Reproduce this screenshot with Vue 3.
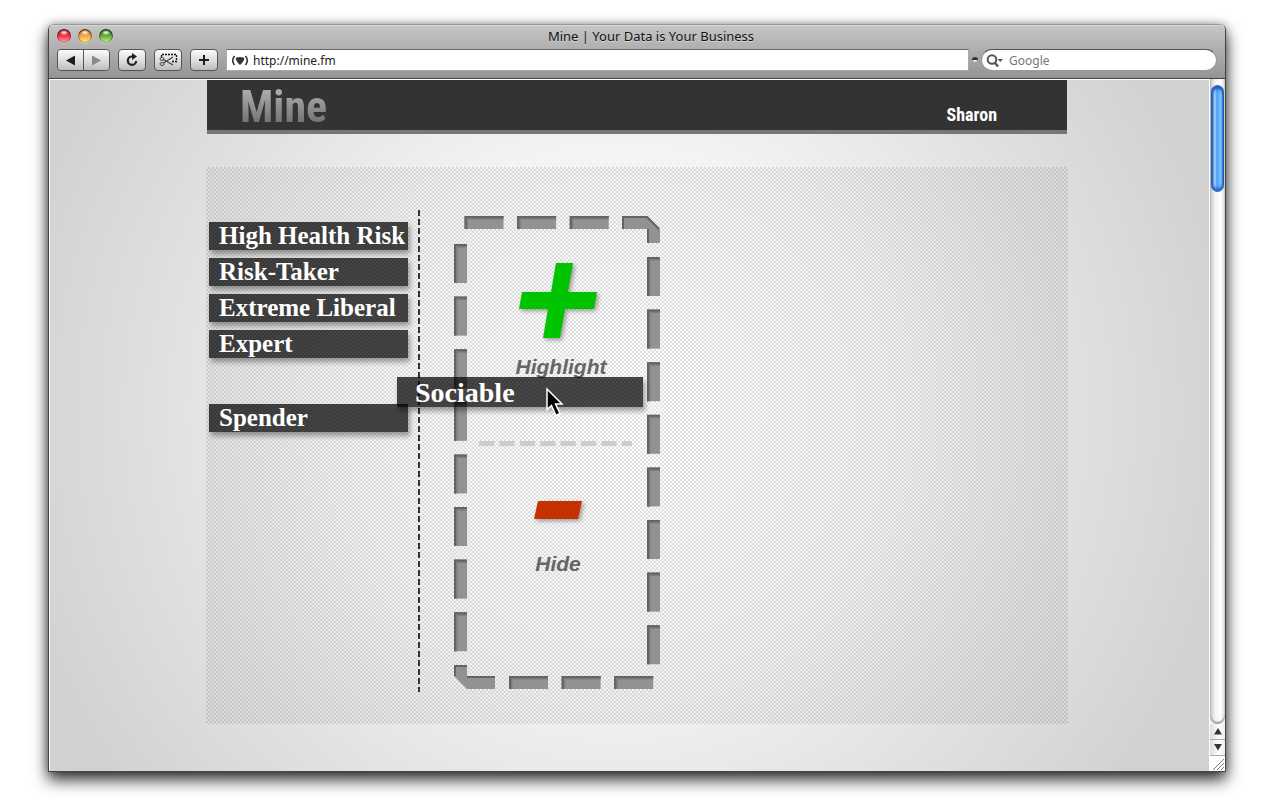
<template>
  <div class="desktop">
    <main class="window">
      <header class="chrome">
        <div class="titlebar">
          <div class="lights">
            <button class="light red" type="button" aria-label="Close"></button>
            <button class="light amber" type="button" aria-label="Minimize"></button>
            <button class="light green" type="button" aria-label="Zoom"></button>
          </div>
          <h1 class="title">Mine | Your Data is Your Business</h1>
        </div>
        <div class="toolbar">
          <div class="pair">
            <button class="tool" type="button" aria-label="Back">
              <svg width="25" height="20" viewBox="0 0 25 20"><path d="M17 5.500v10L8 10.500z" fill="#1c1c1c" /></svg>
            </button>
            <button class="tool" type="button" aria-label="Forward">
              <svg width="25" height="20" viewBox="0 0 25 20"><path d="M8 5.500v10l9-5z" fill="#8a8a8a" /></svg>
            </button>
          </div>
          <button class="tool single" type="button" aria-label="Reload">
            <svg width="26" height="20" viewBox="0 0 26 20">
              <path d="M14 6.500h-1.500a4.200 4.200 0 1 0 4.700 4.500" fill="none" stroke="#222" stroke-width="2.200" />
              <path d="M13 3l5 3.500-5 3.500z" fill="#222" />
            </svg>
          </button>
          <button class="tool single" type="button" aria-label="Clip">
            <svg width="26" height="20" viewBox="0 0 26 20" fill="none">
              <path d="M6.500 7V4.500h15v7h-5" stroke="#111" stroke-width="1.300" stroke-dasharray="2 1" />
              <g stroke="#444" stroke-width="1">
                <ellipse cx="7" cy="14" rx="2" ry="1.500" />
                <ellipse cx="7" cy="9" rx="2" ry="1.500" />
                <path d="M8.500 13L18 7M8.500 9.500L18 15" stroke-width="1.300" />
              </g>
            </svg>
          </button>
          <button class="tool single" type="button" aria-label="Add bookmark">
            <svg width="26" height="20" viewBox="0 0 26 20"><path d="M12 5h2v4h4v2h-4v4h-2v-4H8V9h4z" fill="#1c1c1c" /></svg>
          </button>
          <label class="address">
            <svg width="18" height="14" viewBox="0 0 18 14">
              <path d="M3.500 2Q0 6.500 3.500 11M14.500 2Q18 6.500 14.500 11" fill="none" stroke="#333" stroke-width="1.600" />
              <path d="M4.500 5L6 3l1.500.5L9 2.800l1.500.7L12 3l1.500 2-1 1.800L11 9l-2 2-2-2-1.500-2.200z" fill="#333" />
            </svg>
            <input v-model="address" type="text" aria-label="Address" />
          </label>
          <svg class="knob" width="6" height="6" viewBox="0 0 6 6">
            <path d="M0 3a3 3 0 0 1 6 0z" fill="#333" /><path d="M1 3h4a2 2 0 0 1-4 0z" fill="#eee" />
          </svg>
          <label class="search">
            <svg width="20" height="16" viewBox="0 0 20 16">
              <circle cx="7" cy="6.500" r="4.300" fill="none" stroke="#555" stroke-width="2" />
              <path d="M10 10l3 3.500" stroke="#555" stroke-width="2.400" />
              <path d="M12.500 6h5.500l-2.700 3z" fill="#555" />
            </svg>
            <input type="text" placeholder="Google" aria-label="Search" />
          </label>
        </div>
      </header>

      <div class="view">
        <div class="page">
          <header class="banner">
            <div class="logo">Mine</div>
            <a class="user" href="#">Sharon</a>
          </header>

          <section class="board">
            <ul class="tags">
              <li v-for="tag in tags" :key="tag" class="tag" :class="{ slot: !tag }">{{ tag }}</li>
            </ul>
            <div class="rule"></div>
            <div class="zone">
              <svg class="frame" width="206" height="474" viewBox="0 0 206 474">
                <g v-for="(d, i) in dashes" :key="i">
                  <rect :x="d.x" :y="d.y" :width="d.w" :height="d.h" fill="#929292" />
                  <path :d="`M${d.x + 2} ${d.y + d.h}V${d.y + 2}H${d.x + d.w}`" fill="none" stroke="#7c7c7c" stroke-width="3" />
                  <path :d="`M${d.x + 1} ${d.y + d.h}V${d.y + 1}H${d.x + d.w}`" fill="none" stroke="#636363" stroke-width="2" />
                </g>
                <path d="M168 0H193L206 13V27H193V13H168z" fill="#929292" />
                <path d="M169 13V1H193L205 13M194 27V13" fill="none" stroke="#636363" stroke-width="2" />
                <path d="M0 449H13V460H41V473H13L0 460z" fill="#929292" />
                <path d="M1 460V450H13M13 461H41" fill="none" stroke="#636363" stroke-width="2" />
              </svg>
              <div class="target top">
                <svg class="sign plus" width="82" height="78" viewBox="0 0 82 78">
                  <path d="M39 0H56L51 29H80L77 46H48L43 75H26L31 46H2L5 29H34z" fill="#00c400" />
                </svg>
                <span>Highlight</span>
              </div>
              <svg class="split" width="153" height="5" viewBox="0 0 153 5">
                <path d="M0 2.500H153" stroke="#ccc" stroke-width="5" stroke-dasharray="15.200 5.200" />
              </svg>
              <div class="target bottom">
                <svg class="sign" width="50" height="20" viewBox="0 0 50 20">
                  <path d="M5 0H49L45 18H1z" fill="#c63100" />
                </svg>
                <span>Hide</span>
              </div>
            </div>
            <div class="dragged">Sociable
              <svg class="pointer" width="20" height="31" viewBox="0 0 20 31">
                <path d="M2 2V22.500L6.500 18.500L11 28.500L15 26.500L10.500 17H17z" fill="#000" stroke="#fff" stroke-width="1.500" />
              </svg>
            </div>
          </section>
        </div>

        <div class="scroll">
          <div class="track"><div class="thumb"></div></div>
          <button class="step" type="button" aria-label="Scroll up">
            <svg width="8" height="7" viewBox="0 0 8 7"><path d="M4 0l4 6.500H0z" fill="#333" /></svg>
          </button>
          <button class="step" type="button" aria-label="Scroll down">
            <svg width="8" height="7" viewBox="0 0 8 7"><path d="M4 6.500L0 0h8z" fill="#333" /></svg>
          </button>
          <div class="grip">
            <svg width="13" height="13" viewBox="0 0 13 13"><path d="M1 12L12 1M5 12l7-7M9 12l3-3" stroke="#777" /></svg>
          </div>
        </div>
      </div>
    </main>
  </div>
</template>

<script setup>
import { ref } from 'vue'

const address = ref('http://mine.fm')

// The empty entry is the slot left behind by the tag being dragged.
const tags = ['High Health Risk', 'Risk-Taker', 'Extreme Liberal', 'Expert', '', 'Spender']

const step = 52.6
const run = (count, make) => Array.from({ length: count }, (_, i) => make(i * step))

const dashes = [
  ...run(3, (o) => ({ x: 10.5 + o, y: 0, w: 39, h: 13 })),
  ...run(8, (o) => ({ x: 193, y: 41 + o, w: 13, h: 39 })),
  ...run(3, (o) => ({ x: 55 + o, y: 460, w: 39, h: 13 })),
  ...run(8, (o) => ({ x: 0, y: 28 + o, w: 13, h: 39 })),
]
</script>

<style>
body {
  background: #fff;
}
</style>

<style scoped>
* {
  box-sizing: border-box;
}

button,
input {
  font: inherit;
  padding: 0;
  border: 0;
  background: none;
}

svg {
  display: block;
}

.desktop {
  display: flex;
  min-height: 100vh;
  padding: 24px 54px 28px 48px;
  font-family: "Noto Sans", "Open Sans", sans-serif;
}

.window {
  display: flex;
  flex: 1;
  flex-direction: column;
  border: 1px solid #444;
  border-top-color: #999;
  border-radius: 6px 6px 0 0;
  box-shadow: 0 8px 16px rgba(0, 0, 0, 0.8), 0 0 8px rgba(0, 0, 0, 0.3);
}

.chrome {
  height: 54px;
  border-bottom: 1px solid #444;
  border-radius: 5px 5px 0 0;
  background: linear-gradient(#c6c6c6, #949494);
  box-shadow: inset 0 1px #d8d8d8;
}

.titlebar {
  display: flex;
  align-items: center;
  height: 24px;
  padding: 0 8px 2px;
}

.lights {
  display: flex;
  flex: 1;
  gap: 7px;
}

.titlebar::after {
  content: "";
  flex: 1;
}

.light {
  width: 14px;
  height: 14px;
  border-radius: 50%;
  box-shadow: inset 0 1px 2px rgba(0, 0, 0, 0.6), inset 0 0 0 1px rgba(0, 0, 0, 0.25), 0 1px #ccc;
}

.red {
  background: radial-gradient(ellipse 5px 3px at 50% 25%, #fff, transparent), linear-gradient(#c8141c 20%, #f5343a 50%, #ffb4b4);
}

.amber {
  background: radial-gradient(ellipse 5px 3px at 50% 25%, #fff, transparent), linear-gradient(#d0701c 20%, #f8a848 50%, #fff080);
}

.green {
  background: radial-gradient(ellipse 5px 3px at 50% 25%, #fff, transparent), linear-gradient(#2c781c 20%, #66b03c 50%, #ccf09a);
}

.title {
  margin: 0 0 0 28px;
  color: #111;
  font-size: 13px;
  font-weight: 400;
  line-height: 18px;
  text-shadow: 0 1px #d6d6d6;
}

.toolbar {
  display: flex;
  align-items: center;
  gap: 8px;
  height: 22px;
  padding: 0 8px;
}

.pair {
  display: flex;
  border: 1px solid #555;
  border-radius: 4px;
  overflow: hidden;
}

.tool {
  display: block;
  height: 20px;
  background: linear-gradient(#fbfbfb, #d9d9d9 60%, #bcbcbc);
}

.pair .tool {
  width: 25px;
}

.pair .tool + .tool {
  width: 26px;
  border-left: 1px solid #555;
}

.single {
  width: 28px;
  height: 22px;
  border: 1px solid #555;
  border-radius: 4px;
}

.address {
  display: flex;
  flex: 1;
  align-items: center;
  gap: 4px;
  height: 22px;
  padding: 1px 4px 0;
  border: 1px solid #aaa;
  border-top-color: #666;
  background: #fff;
}

.address input,
.search input {
  flex: 1;
  min-width: 0;
  color: #222;
  font-size: 12px;
  line-height: 18px;
  outline: 0;
}

.knob {
  margin: 0 -5px;
}

.search {
  display: flex;
  align-items: center;
  gap: 4px;
  width: 236px;
  height: 22px;
  padding: 1px 12px 0 3px;
  border: 1px solid #999;
  border-top-color: #555;
  border-radius: 11px;
  background: #fff;
}

.search input::placeholder {
  color: #777;
}

.view {
  display: flex;
  flex: 1;
}

.page {
  flex: 1;
  padding: 0 0 47px 15px;
  border: 1px solid #fff;
  border-bottom: 0;
  background: radial-gradient(circle at 49% 48%, #fff 0, #f3f3f3 270px, #e0e0e0 460px, #d2d2d2 620px);
}

.banner {
  display: flex;
  align-items: center;
  justify-content: space-between;
  max-width: 860px;
  height: 54px;
  margin: 0 auto;
  padding: 0 70px 0 33px;
  border-bottom: 4px solid #777;
  background: #333;
  font-family: "Liberation Sans Narrow", "Roboto Condensed", "Liberation Sans", sans-serif;
  font-weight: 700;
}

.logo {
  margin-top: 4px;
  background: linear-gradient(#aaa 20%, #707070 85%);
  background-clip: text;
  color: transparent;
  font-size: 44px;
  line-height: 50px;
}

.user {
  margin-top: 20px;
  color: #fff;
  font-size: 18px;
  line-height: 20px;
  text-decoration: none;
}

.board {
  position: relative;
  display: flex;
  align-items: flex-start;
  max-width: 862px;
  min-height: 557px;
  margin: 33px auto 0;
  padding: 43px 0 32px 3px;
  background: repeating-conic-gradient(rgba(0, 0, 0, 0.11) 0 25%, transparent 0 50%) 0 0 / 4px 4px;
}

.tags {
  display: flex;
  flex-direction: column;
  gap: 8px;
  width: 199px;
  margin: 12px 10px 0 0;
  padding: 0;
  list-style: none;
}

.tag,
.dragged {
  background: rgba(0, 0, 0, 0.72);
  box-shadow: 2px 4px 5px rgba(0, 0, 0, 0.35);
  color: #fff;
  font-family: "Liberation Serif", serif;
  font-weight: 700;
  white-space: nowrap;
}

.tag {
  height: 28px;
  padding-left: 10px;
  font-size: 25px;
  line-height: 28px;
}

.slot {
  height: 30px;
  background: none;
  box-shadow: none;
}

.rule {
  align-self: stretch;
  width: 2px;
  background: repeating-linear-gradient(#333 0 6px, transparent 6px 9px);
}

.zone {
  position: relative;
  width: 206px;
  height: 474px;
  margin: 6px 0 0 34px;
}

.frame {
  position: absolute;
  inset: 0;
}

.target {
  display: flex;
  flex-direction: column;
  align-items: center;
  color: #666;
  font: italic 700 21px/24px "Liberation Sans", sans-serif;
}

.top {
  height: 225px;
  padding: 47px 0 0 8px;
  gap: 14px;
}

.bottom {
  padding: 55px 0 0 2px;
  gap: 31px;
}

.sign {
  overflow: visible;
  filter: drop-shadow(2px 2px 2px rgba(0, 0, 0, 0.35));
}

.plus {
  margin-right: 6px;
}

.split {
  margin-left: 25px;
}

.dragged {
  position: absolute;
  top: 210px;
  left: 191px;
  width: 246px;
  height: 30px;
  padding-left: 18px;
  font-size: 28px;
  line-height: 31px;
}

.pointer {
  position: absolute;
  top: 10px;
  left: 148px;
}

.scroll {
  display: flex;
  flex-direction: column;
  width: 15px;
  background: #f4f4f4;
}

.track {
  flex: 1;
  padding: 6px 0 0 1px;
  border-radius: 0 0 8px 8px;
  background: linear-gradient(90deg, #c4c4c4, #f4f4f4 35%, #fff 70%, #ddd);
  box-shadow: inset 0 -2px 2px #999;
}

.thumb {
  width: 13px;
  height: 107px;
  border: 1px solid #2458b0;
  border-radius: 7px;
  background: linear-gradient(90deg, #2f70dc, #a9d0f7 20%, #8fbff2 35%, #4a9af0 45%, #8bd4ff 85%, #3b84dc);
  box-shadow: inset 0 3px 3px #1c56bd, inset 0 -3px 3px #2a68cb;
}

.step {
  display: grid;
  place-items: center;
  height: 16px;
  border-bottom: 1px solid #aaa;
  background: linear-gradient(90deg, #ddd, #fff 60%, #eee);
}

.grip {
  display: grid;
  place-items: end;
  height: 15px;
  background: #fff;
}
</style>
